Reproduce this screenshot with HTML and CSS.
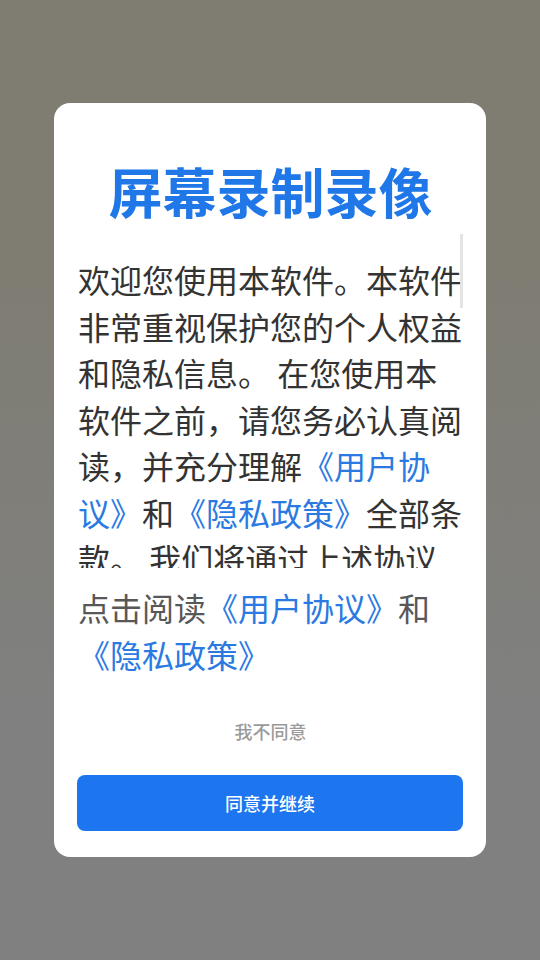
FILE: index.html
```html
<!DOCTYPE html>
<html lang="zh-CN">
<head>
<meta charset="utf-8">
<title>屏幕录制录像</title>
<link rel="stylesheet" href="styles.css">
</head>
<body>
<div class="overlay">
  <div class="dialog">
    <h1 class="title">屏幕录制录像</h1>
    <div class="scroll-box">
      <p class="policy-text">欢迎您使用本软件。本软件非常重视保护您的个人权益和隐私信息。 在您使用本软件之前，请您务必认真阅读，并充分理解<a class="link">《用户协议》</a>和<a class="link">《隐私政策》</a>全部条款。 我们将通过上述协议向您说明我们如何收集、使用、存储和共享您的个人信息，以及您享有的相关权利。</p>
      <div class="scroll-thumb"></div>
    </div>
    <p class="read-text">点击阅读<a class="link">《用户协议》</a>和<a class="link">《隐私政策》</a></p>
    <div class="decline">我不同意</div>
    <button class="agree">同意并继续</button>
  </div>
</div>
</body>
</html>
```
FILE: styles.css
```css
html, body {
  margin: 0;
  padding: 0;
}
body {
  width: 540px;
  height: 960px;
  font-family: "Noto Sans CJK SC", "Noto Sans", sans-serif;
  background: linear-gradient(180deg, #7f7d71 0%, #7f7d73 30%, #808080 75%, #808080 100%);
  overflow: hidden;
}
.overlay {
  display: flex;
  justify-content: center;
  padding-top: 103px;
}
.dialog {
  width: 432px;
  box-sizing: border-box;
  background: #ffffff;
  border-radius: 16px;
  padding: 0 23px 26px 24px;
  display: flex;
  flex-direction: column;
}
.title {
  margin: 55px 0 10px 0;
  font-size: 54px;
  line-height: 66px;
  font-weight: 700;
  color: #1f77e8;
  text-align: center;
  white-space: nowrap;
}
.scroll-box {
  position: relative;
  height: 334px;
  overflow: hidden;
}
.policy-text {
  margin: 0;
  padding-top: 22px;
  font-size: 32px;
  line-height: 46.5px;
  color: #333333;
}
.link {
  color: #2a7ae2;
  text-decoration: none;
}
.scroll-thumb {
  position: absolute;
  top: 0;
  right: 0;
  width: 3px;
  height: 74px;
  background: #e4e4e4;
}
.read-text {
  margin: 16px 0 0 0;
  font-size: 32px;
  line-height: 46.5px;
  color: #585858;
}
.decline {
  margin-top: 42px;
  font-size: 18px;
  line-height: 24px;
  font-weight: 500;
  color: #9a9a9a;
  text-align: center;
}
.agree {
  margin-top: 32px;
  margin-left: -1px;
  height: 56px;
  border: none;
  border-radius: 8px;
  background: #1d76ef;
  color: #ffffff;
  font-family: "Noto Sans CJK SC", "Noto Sans", sans-serif;
  font-size: 18px;
  font-weight: 500;
  padding: 0;
}
```
